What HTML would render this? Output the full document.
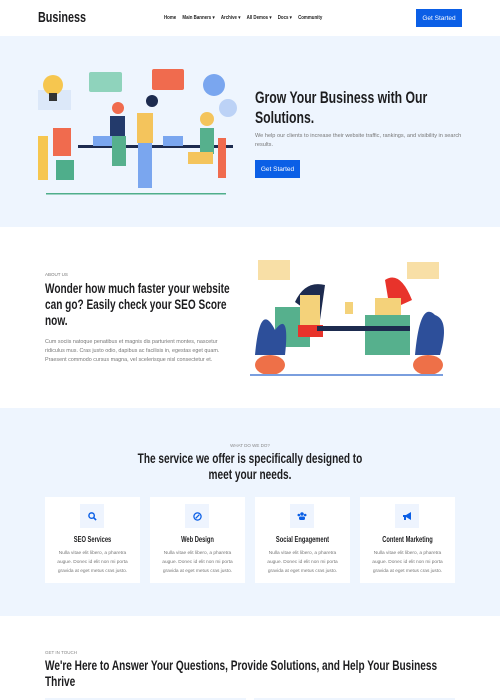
<!DOCTYPE html>
<html><head><meta charset="utf-8"><style>
*{margin:0;padding:0;box-sizing:border-box}
body{width:500px;height:700px;overflow:hidden;font-family:"Liberation Sans",sans-serif;background:#fff;position:relative}
.h{font-family:"Liberation Sans",sans-serif;font-weight:bold;color:#1d1d1f;position:absolute;transform:scaleX(.72);transform-origin:0 0;white-space:nowrap}
.c{transform-origin:50% 0}
.a{position:absolute}
.p{position:absolute;color:#777;font-size:5.6px;line-height:9px}
.btn{position:absolute;background:#0b5fe6;color:#fff;font-size:6.5px;display:flex;align-items:center;justify-content:center}
.nav span{margin-right:7px}
.card{position:absolute;top:497px;width:95px;height:86px;background:#fff}
.card .ic{position:absolute;left:35px;top:7px;width:24px;height:24px;background:#eef4fe;display:flex;align-items:center;justify-content:center}
.card .t{position:absolute;top:38px;left:0;width:100%;text-align:center;font-size:8px;transform-origin:50% 0}
.card .d{position:absolute;top:52px;left:6px;right:6px;text-align:center;color:#777;font-size:4.8px;line-height:9px}
</style></head><body>
<div class="h" style="left:38px;top:9px;font-size:15px">Business</div>
<div class="a nav" style="left:164px;top:15px;font-size:5px;font-weight:bold;color:#222;transform:scaleX(.88);transform-origin:0 0;white-space:nowrap"><span>Home</span><span>Main Banners ▾</span><span>Archive ▾</span><span>All Demos ▾</span><span>Docs ▾</span><span>Community</span></div>
<div class="btn" style="left:416px;top:9px;width:46px;height:18px">Get Started</div>
<div class="a" style="left:0;top:36px;width:500px;height:191px;background:#eef5fe"></div>
<svg class="a" style="left:38px;top:68px" width="210" height="128" viewBox="0 0 210 128">
<rect x="0" y="22" width="33" height="20" fill="#dce8f9"/><circle cx="15" cy="17" r="10" fill="#f6c64f"/><rect x="11" y="25" width="8" height="8" fill="#333"/>
<rect x="51" y="4" width="33" height="20" rx="2" fill="#8fd3bc"/><rect x="114" y="1" width="32" height="21" rx="2" fill="#f06b4e"/>
<circle cx="176" cy="17" r="11" fill="#7aa6ef"/><circle cx="190" cy="40" r="9" fill="#bcd2f6"/>
<rect x="0" y="68" width="10" height="44" fill="#f6c64f"/><rect x="15" y="60" width="18" height="28" fill="#f06b4e"/><rect x="18" y="92" width="18" height="20" fill="#4fae8b"/>
<rect x="40" y="77" width="155" height="3" fill="#1d2b4f"/><rect x="55" y="68" width="20" height="10" fill="#7aa6ef"/><rect x="125" y="68" width="20" height="10" fill="#7aa6ef"/>
<rect x="72" y="48" width="15" height="20" fill="#233a6b"/><rect x="74" y="68" width="14" height="30" fill="#56b08d"/><circle cx="80" cy="40" r="6" fill="#f06b4e"/>
<rect x="99" y="45" width="16" height="30" fill="#f4c45c"/><rect x="100" y="75" width="14" height="45" fill="#7aa6ef"/><circle cx="114" cy="33" r="6" fill="#1d2b4f"/>
<rect x="162" y="60" width="14" height="26" fill="#56b08d"/><rect x="150" y="84" width="25" height="12" fill="#f4c45c"/><rect x="180" y="70" width="8" height="40" fill="#f06b4e"/><circle cx="169" cy="51" r="7" fill="#f4c45c"/>
<rect x="8" y="125" width="180" height="1.5" fill="#4fae8b"/></svg>
<div class="h" style="left:255px;top:88px;font-size:17px;line-height:20px">Grow Your Business with Our<br>Solutions.</div>
<div class="p" style="left:255px;top:132px;width:210px">We help our clients to increase their website traffic, rankings, and visibility in search results.</div>
<div class="btn" style="left:255px;top:160px;width:45px;height:18px">Get Started</div>
<div class="a" style="left:45px;top:272px;font-size:4.5px;color:#777">ABOUT US</div>
<div class="h" style="left:45px;top:280px;font-size:14px;line-height:16px">Wonder how much faster your website<br>can go? Easily check your SEO Score<br>now.</div>
<div class="p" style="left:45px;top:338px;width:185px;font-size:5.4px">Cum sociis natoque penatibus et magnis dis parturient montes, nascetur ridiculus mus. Cras justo odio, dapibus ac facilisis in, egestas eget quam. Praesent commodo cursus magna, vel scelerisque nisl consectetur et.</div>
<svg class="a" style="left:250px;top:260px" width="200" height="120" viewBox="0 0 200 120">
<rect x="8" y="0" width="32" height="20" fill="#f8dfa6"/><rect x="157" y="2" width="32" height="17" fill="#f8dfa6"/>
<path d="M45 42 Q55 20 75 25 L70 60Z" fill="#1d2b4f"/><rect x="25" y="47" width="35" height="40" fill="#56b08d"/><rect x="50" y="35" width="20" height="30" fill="#f4d27a"/><rect x="48" y="65" width="25" height="12" fill="#e8332b"/>
<path d="M135 20 Q150 10 162 40 L140 50Z" fill="#e8332b"/><rect x="125" y="38" width="26" height="30" fill="#f4d27a"/><rect x="115" y="55" width="45" height="40" fill="#56b08d"/>
<rect x="67" y="66" width="93" height="5" fill="#1d2b4f"/><rect x="95" y="42" width="8" height="12" fill="#f4d27a"/>
<path d="M5 95 Q10 40 25 70 Q40 50 35 95Z" fill="#2d4f9a"/><path d="M165 95 Q170 40 185 55 Q200 60 190 95Z" fill="#2d4f9a"/>
<ellipse cx="20" cy="105" rx="15" ry="10" fill="#ee7048"/><ellipse cx="178" cy="105" rx="15" ry="10" fill="#ee7048"/>
<rect x="0" y="114" width="193" height="2" fill="#7a9ede"/></svg>
<div class="a" style="left:0;top:408px;width:500px;height:208px;background:#eef5fe"></div>
<div class="a" style="left:0;top:443px;width:500px;text-align:center;font-size:4.5px;color:#888">WHAT DO WE DO?</div>
<div class="h c" style="left:0;top:450px;width:500px;text-align:center;font-size:14px;line-height:16px">The service we offer is specifically designed to<br>meet your needs.</div>
<div class="card" style="left:45px"><div class="ic"><svg width="9" height="9" viewBox="0 0 10 10"><circle cx="4" cy="4" r="3" fill="none" stroke="#0b5fe6" stroke-width="1.6"/><path d="M6 6l3 3" stroke="#0b5fe6" stroke-width="1.8"/></svg></div><div class="t h">SEO Services</div><div class="d">Nulla vitae elit libero, a pharetra augue. Donec id elit non mi porta gravida at eget metus cras justo.</div></div>
<div class="card" style="left:150px"><div class="ic"><svg width="9" height="9" viewBox="0 0 10 10"><circle cx="5" cy="5" r="4" fill="none" stroke="#0b5fe6" stroke-width="1.4"/><path d="M3 7l4-4" stroke="#0b5fe6" stroke-width="1.4"/></svg></div><div class="t h">Web Design</div><div class="d">Nulla vitae elit libero, a pharetra augue. Donec id elit non mi porta gravida at eget metus cras justo.</div></div>
<div class="card" style="left:255px"><div class="ic"><svg width="10" height="8" viewBox="0 0 10 8"><circle cx="5" cy="2" r="1.8" fill="#0b5fe6"/><circle cx="1.8" cy="3" r="1.3" fill="#0b5fe6"/><circle cx="8.2" cy="3" r="1.3" fill="#0b5fe6"/><rect x="2" y="4.5" width="6" height="3.5" rx="1.5" fill="#0b5fe6"/></svg></div><div class="t h">Social Engagement</div><div class="d">Nulla vitae elit libero, a pharetra augue. Donec id elit non mi porta gravida at eget metus cras justo.</div></div>
<div class="card" style="left:360px"><div class="ic"><svg width="10" height="9" viewBox="0 0 10 9"><path d="M1 3h3l5-3v8L4 5H1z" fill="#0b5fe6"/><rect x="2" y="5" width="2" height="3" fill="#0b5fe6"/></svg></div><div class="t h">Content Marketing</div><div class="d">Nulla vitae elit libero, a pharetra augue. Donec id elit non mi porta gravida at eget metus cras justo.</div></div>
<div class="a" style="left:45px;top:650px;font-size:4.5px;color:#888">GET IN TOUCH</div>
<div class="h" style="left:45px;top:657px;font-size:14px;line-height:16px">We're Here to Answer Your Questions, Provide Solutions, and Help Your Business<br>Thrive</div>
<div class="a" style="left:45px;top:698px;width:201px;height:2px;background:#eef5fe"></div>
<div class="a" style="left:254px;top:698px;width:201px;height:2px;background:#eef5fe"></div>
</body></html>
